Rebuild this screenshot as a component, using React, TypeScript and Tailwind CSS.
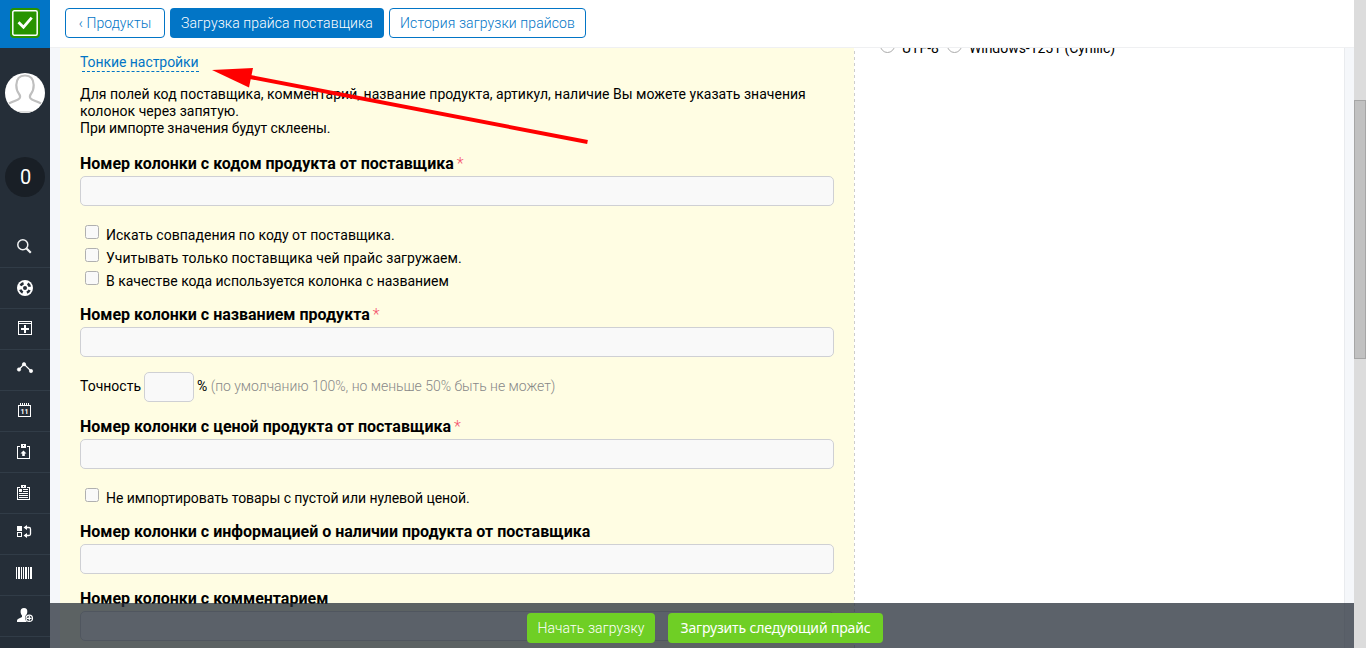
import type { ReactNode } from "react";

const icons: ReactNode[] = [
  <g key="search" fill="none" stroke="#f2f4f5">
    <circle cx="22.8" cy="17.8" r="5" strokeWidth="1.5" />
    <path d="M26.5 21.5l4.3 4.3" strokeWidth="2.2" />
  </g>,
  <g key="help">
    <circle cx="25" cy="20" r="8" fill="#fff" />
    <circle cx="25" cy="20" r="5" fill="none" stroke="#252e38" strokeWidth="2.6" strokeDasharray="3.6 4.254" strokeDashoffset="-2.127" />
    <circle cx="25" cy="20" r="2" fill="#252e38" />
  </g>,
  <g key="add" fill="none" stroke="#fff" shapeRendering="crispEdges">
    <path d="M18.5 12.5h13v13h-13zM18 14.5h14" strokeWidth="1" />
    <path d="M25 16v8M21 20h8" strokeWidth="2" />
  </g>,
  <g key="graph" fill="#fff" stroke="#fff">
    <path d="M19 19.500l5-5.500 7 7" fill="none" strokeWidth="1.2" />
    <circle cx="19" cy="19.500" r="1.7" strokeWidth=".6" />
    <circle cx="24" cy="14.200" r="1.7" strokeWidth=".6" />
    <circle cx="31" cy="21" r="1.7" strokeWidth=".6" />
  </g>,
  <g key="calendar">
    <g fill="none" stroke="#fff" shapeRendering="crispEdges">
      <path d="M18.5 14.5v11h12v-11M18 14.5h13" />
      <path d="M20.5 12v2M22.5 12v2M24.5 12v2M26.5 12v2M28.5 12v2" />
    </g>
    <text x="24.6" y="23" textAnchor="middle" fontSize="7" fontWeight="700" fill="#fff" fontFamily="Roboto, sans-serif">11</text>
  </g>,
  <g key="upload">
    <path d="M20 14.500h-2.500v12h12v-12H27" fill="none" stroke="#fff" shapeRendering="crispEdges" />
    <path d="M21 12h5v4h-5zM23 13v1h1v-1z" fill="#fff" fillRule="evenodd" />
    <path d="M23.500 18.500l3 3h-1.700v2.500h-2.600v-2.500h-1.700z" fill="#fff" />
  </g>,
  <g key="list">
    <path d="M20 14.500h-2.500v12h12v-12H27M23 18.500h5M19 20.500h9M19 22.500h9M19 24.500h9" fill="none" stroke="#fff" shapeRendering="crispEdges" />
    <path d="M21 12h5v3h-5zM23 13v1h1v-1zM19 16h3v3h-3zM26 16h2v1h-5v-1z" fill="#fff" fillRule="evenodd" />
  </g>,
  <g key="exchange">
    <path d="M17 12h5v5h-5z" fill="#fff" shapeRendering="crispEdges" />
    <path d="M17.500 18.500h4v4h-4z" fill="none" stroke="#fff" shapeRendering="crispEdges" />
    <path d="M25 13.500h4q1.500 0 1.500 1.500v5q0 1.500-1.500 1.500h-4" fill="none" stroke="#fff" strokeWidth="1.300" />
    <path d="M27 11v5l-3.500-2.500zM27 19v5l-3.500-2.500z" fill="#fff" />
  </g>,
  <g key="barcode" fill="#fff" shapeRendering="crispEdges">
    <path d="M16 12h1v12h-1zM18 12h2v12h-2zM21 12h1v12h-1zM23 12h1v12h-1zM25 12h2v12h-2zM28 12h1v12h-1zM30 12h2v12h-2z" />
  </g>,
  <g key="user">
    <path d="M24 12c2.400 0 3.500 1.600 3.300 4-.1 1.500-.7 2.600-1.500 3.500v1.500l2.200 1.200V26H17v-1.500c.2-1.500 2-2 5-3.400v-1.600c-.8-.9-1.300-2-1.400-3.500C20.500 13.600 21.600 12 24 12z" fill="#fff" />
    <circle cx="29.300" cy="22.300" r="4.200" fill="#252e38" />
    <circle cx="29.300" cy="22.300" r="3.200" fill="none" stroke="#fff" strokeWidth="1.200" />
    <path d="M29.300 20v4.600M27 22.300h4.600" stroke="#fff" strokeWidth="1.200" />
  </g>,
];

function Sidebar() {
  return (
    <aside className="flex h-[648px] w-[50px] shrink-0 flex-col overflow-hidden bg-[#252e38]">
      <div className="flex h-12 shrink-0 items-start bg-[#0275c6] pt-2 pl-[10px]">
        <svg width="30" height="30" viewBox="0 0 30 30">
          <rect width="30" height="30" rx="4" fill="#279300" />
          <rect x="2.800" y="2.800" width="24.400" height="24.400" rx="1.500" fill="none" stroke="#fff" strokeWidth="1.500" />
          <path d="M8.500 14.200l5 5 8.200-9.500" fill="none" stroke="#fff" strokeWidth="2.800" />
        </svg>
      </div>
      <div className="mx-auto mt-[25px] size-10 shrink-0 overflow-hidden rounded-full bg-white">
        <svg width="40" height="40" viewBox="0 0 40 40" fill="none" stroke="#bfbfbf" strokeWidth="2.200">
          <path d="M4 30.500c5-2.700 9-3.200 10.500-5.200 1.200-1.700.7-3-.6-4.600-2-2.500-2.600-5-2.600-8.700C11.500 6 14 2.500 20 2.500s8.500 3.500 8.700 9.500c0 3.700-.6 6.200-2.600 8.700-1.300 1.600-1.800 2.900-.6 4.600 1.500 2 5.500 2.500 10.500 5.200" />
          <path d="M10 39h20" stroke="#ddd" />
        </svg>
      </div>
      <div className="mx-auto mt-11 flex size-10 shrink-0 items-center justify-center rounded-full bg-[#191f26] pl-px text-xl text-white">0</div>
      <nav className="mt-[30px]">
        {icons.map((icon, i) => (
          <div key={i} className="h-[41px] border-b border-[#313c47]">
            <svg className="block" width="50" height="40" viewBox="0 0 50 40">{icon}</svg>
          </div>
        ))}
      </nav>
    </aside>
  );
}

function Field({ label, required }: { label: string; required?: boolean }) {
  return (
    <div>
      <div className="flex h-[26px] items-center pt-[2px] text-base font-bold whitespace-pre">
        {label}
        {required && <span className="-ml-px font-light text-[#f4516c]"> *</span>}
      </div>
      <div className="h-[30px] rounded-[5px] border border-[#cfd0d4] bg-[#f9f9f9]" />
    </div>
  );
}

function Check({ label, tracking = "" }: { label: string; tracking?: string }) {
  return (
    <div className="flex h-[23px] items-start pl-[5px]">
      <div className="size-[14px] rounded-[2.500px] border border-[#b0b0b0] bg-[#f9f9f9]" />
      <div className={`ml-[7px] pt-px leading-[18px] ${tracking}`}>{label}</div>
    </div>
  );
}

export default function App() {
  return (
    <div className="relative flex h-[648px] w-[1366px] overflow-hidden bg-[#f5f7fa] font-['Roboto',sans-serif] text-sm text-black">
      <Sidebar />
      <main className="flex h-[648px] w-[1304px] flex-col overflow-hidden">
        <header className="flex h-12 shrink-0 items-start gap-[5px] border-b border-[#eff0f2] bg-white pt-2 pl-[15px] text-sm font-light tracking-[0.1px]">
          <div className="flex h-[30px] w-[100px] items-center justify-center rounded-[4px] border border-[#0275c6] text-[#0275c6]">‹ Продукты</div>
          <div className="flex h-[30px] w-[214px] items-center justify-center rounded-[4px] bg-[#0275c6] text-white">Загрузка прайса поставщика</div>
          <div className="flex h-[30px] w-[197px] items-center justify-center rounded-[4px] border border-[#0275c6] text-[#0275c6]">История загрузки прайсов</div>
        </header>
        <div className="mx-[10px] flex h-[600px] w-[1285px] overflow-hidden border-r border-[#e9ebee] bg-white">
          <section className="w-[794px] shrink-0 bg-[#fffde3] px-5">
            <div className="h-[38px] pt-[6px] text-[#0275c6]">
              <div className="h-[17px] leading-[17px] tracking-[-0.06px]">Тонкие настройки</div>
              <div className="ml-[2px] w-[117px] border-b border-dashed border-[#0275c6]" />
            </div>
            <p className="h-16 w-[754px] leading-[17px]">
              <span className="tracking-[0.025px]">Для полей код поставщика, комментарий, название продукта, артикул, наличие Вы можете указать значения колонок через запятую.</span>
              <br />
              <span className="tracking-[-0.08px]">При импорте значения будут склеены.</span>
            </p>
            <Field label="Номер колонки с кодом продукта от поставщика" required />
            <div className="mt-[19px] mb-[7px]">
              <Check label="Искать совпадения по коду от поставщика." tracking="tracking-[0.025px]" />
              <Check label="Учитывать только поставщика чей прайс загружаем." tracking="tracking-[0.08px]" />
              <Check label="В качестве кода используется колонка с названием" tracking="tracking-[-0.02px]" />
            </div>
            <Field label="Номер колонки с названием продукта" required />
            <div className="mt-[15px] mb-[11px] flex h-[30px] items-center">
              <span className="w-16 pb-[2px]">Точность</span>
              <span className="h-[30px] w-[50px] rounded-[5px] border border-[#cfd0d4] bg-[#f9f9f9]" />
              <span className="ml-[3px] pb-[2px] tracking-[-0.02px] whitespace-pre">% <span className="font-light text-[#888]">(по умолчанию 100%, но меньше 50% быть не может)</span></span>
            </div>
            <Field label="Номер колонки с ценой продукта от поставщика" required />
            <div className="mt-[19px] mb-[7px]">
              <Check label="Не импортировать товары с пустой или нулевой ценой." tracking="tracking-[-0.055px]" />
            </div>
            <Field label="Номер колонки с информацией о наличии продукта от поставщика" />
            <div className="h-[11px]" />
            <Field label="Номер колонки с комментарием" />
          </section>
          <section className="flex grow items-start">
            <svg className="block" width="1" height="600" viewBox="0 0 1 600">
              <path d="M.5 3V600" stroke="#cdcdcd" strokeWidth="1" strokeDasharray="3 3" />
            </svg>
            <div className="-mt-[10px] ml-[25px] flex h-5 items-start leading-5">
              <span className="size-[15px] rounded-full border border-[#aaa]" />
              <span className="ml-[7px]">UTF-8</span>
              <span className="ml-[8px] size-[15px] rounded-full border border-[#aaa]" />
              <span className="ml-[7px] tracking-[-0.04px]">Windows-1251 (Cyrillic)</span>
            </div>
          </section>
        </div>
      </main>
      <div className="h-[648px] w-3 bg-[#dcdcdc] pt-[100px]">
        <div className="h-[259px] border border-[#a6a6a6] bg-[#c1c1c1]" />
      </div>
      <footer className="absolute top-[603px] left-[50px] flex h-[45px] w-[1304px] items-start gap-[13px] bg-[#252e38]/75 pt-[10px] pl-[477px] text-white">
        <div className="flex h-[30px] w-32 items-center justify-center rounded-[4px] bg-[#6fcf25] font-light tracking-[0.1px]">Начать загрузку</div>
        <div className="flex h-[30px] w-[215px] items-center justify-center rounded-[4px] bg-[#6fcf25] font-['Noto_Sans',sans-serif] tracking-[-0.16px]">Загрузить следующий прайс</div>
      </footer>
      <svg className="pointer-events-none absolute top-[60px] left-[205px]" width="390" height="90" viewBox="205 60 390 90">
        <path d="M250 77L587.500 142" stroke="#f00" strokeWidth="4" />
        <path d="M212 70L253 68L249 87.500z" fill="#f00" />
      </svg>
    </div>
  );
}
